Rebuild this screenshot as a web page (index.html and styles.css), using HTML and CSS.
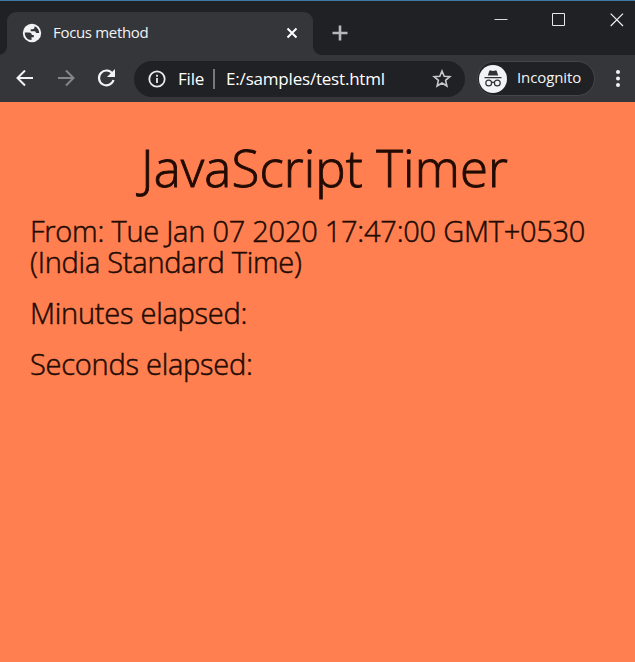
FILE: index.html
```html
<!DOCTYPE html>
<html lang="en">
<head>
    <meta charset="UTF-8">
    <meta name="viewport" content="width=device-width, initial-scale=1.0">
    <title>Focus method</title>
    <link rel="stylesheet" href="styles.css">
</head>
<body>
    <header class="browser">
        <div class="tabs">
            <div class="tab">
                <svg class="globe" width="20" height="20" viewBox="0 0 20 20">
                    <circle cx="10" cy="10" r="9.2" fill="#f1f3f4"/>
                    <path d="M2.800 9.500h4.200q2.800.2 2.800 2.600h2v2.200h-2.300v2.700C5.500 17.200 2.500 13.500 2.800 9.500zM12.500 3.200v1.300q0 1.800-2 1.800H8.700v2h4.100q1 0 1.200 1.700h3.200c0-3-1.800-5.800-4.700-6.800z" fill="#35363a"/>
                </svg>
                <span class="tab-title">Focus method</span>
                <svg class="tab-close" width="12" height="12" viewBox="0 0 12 12">
                    <path d="M1.500 1.500l9 9M10.500 1.500l-9 9" stroke="#fff" stroke-width="2"/>
                </svg>
            </div>
            <svg class="new-tab" width="16" height="16" viewBox="0 0 16 16">
                <path d="M8 .5v15M.5 8h15" stroke="#b5b8bc" stroke-width="2.600"/>
            </svg>
            <div class="window-buttons">
                <svg width="14" height="14" viewBox="0 0 14 14"><path d="M.5 6.500h13" stroke="#d8d8d8"/></svg>
                <svg width="14" height="14" viewBox="0 0 14 14"><path d="M.5.5h12v12H.5z" stroke="#e8e8e8" fill="none"/></svg>
                <svg width="14" height="14" viewBox="0 0 14 14"><path d="M.7.7l12.300 12.300M13 .7L.7 13" stroke="#f0f0f0" stroke-width="1.200"/></svg>
            </div>
        </div>
        <div class="toolbar">
            <svg class="back" width="18" height="18" viewBox="0 0 18 18">
                <path d="M17 8H2M9 .5L1.500 8 9 15.500" stroke="#f1f3f4" stroke-width="2" fill="none"/>
            </svg>
            <svg class="forward" width="18" height="18" viewBox="0 0 18 18">
                <path d="M0 8h15M8 .5l7.500 7.500L8 15.500" stroke="#85868a" stroke-width="2" fill="none"/>
            </svg>
            <svg class="reload" width="20" height="20" viewBox="0 0 20 20">
                <path d="M15.500 4.700A7.400 7.400 0 1 0 16.500 11" stroke="#f1f3f4" stroke-width="2.200" fill="none"/>
                <path d="M18 0v8h-8z" fill="#f1f3f4"/>
            </svg>
            <div class="address">
                <svg class="info" width="18" height="18" viewBox="0 0 18 18">
                    <circle cx="9" cy="9" r="7.700" stroke="#e8eaed" stroke-width="1.800" fill="none"/>
                    <path d="M9 8v5M9 4.800v1.900" stroke="#e8eaed" stroke-width="1.800"/>
                </svg>
                <span class="scheme">File</span>
                <span class="divider"></span>
                <span class="url">E:/samples/test.html</span>
                <svg class="star" width="20" height="20" viewBox="0 0 20 20">
                    <path d="M10 2l2.200 5.200 5.700.5-4.300 3.700 1.300 5.600-4.900-3-4.900 3 1.300-5.600-4.300-3.700 5.700-.5z" stroke="#c6c8cb" stroke-width="1.600" fill="none"/>
                </svg>
            </div>
            <div class="profile">
                <svg width="28" height="28" viewBox="0 0 28 28">
                    <circle cx="14" cy="14" r="14" fill="#f1f3f4"/>
                    <path d="M8.800 10.500l1.500-4.500q.3-.8 1.200-.6l2.500.6 2.500-.6q.9-.2 1.200.6l1.500 4.500zM5.500 12h17v1.200h-17z" fill="#303134"/>
                    <g fill="none" stroke="#303134" stroke-width="1.200">
                        <circle cx="9.700" cy="18" r="2.900"/>
                        <circle cx="18.300" cy="18" r="2.900"/>
                        <path d="M12.600 17.700q1.400-1 2.800 0"/>
                    </g>
                </svg>
                <span class="profile-name">Incognito</span>
            </div>
            <svg class="menu" width="4" height="18" viewBox="0 0 4 18" fill="#f1f3f4">
                <circle cx="2" cy="2" r="2"/>
                <circle cx="2" cy="8.500" r="2"/>
                <circle cx="2" cy="15" r="2"/>
            </svg>
        </div>
    </header>
    <main>
        <h1 class="title">JavaScript Timer</h1>
        <p class="from">From: Tue Jan 07 2020 17:47:00 GMT+0530 (India Standard Time)</p>
        <p class="elapsed">Minutes elapsed:</p>
        <p class="elapsed">Seconds elapsed:</p>
    </main>
</body>
</html>
```
FILE: styles.css
```css
*,
*::before,
*::after {
    box-sizing: border-box;
    padding: 0;
    margin: 0;
}

body {
    height: 662px;
    overflow: hidden;
    background-color: #ff7f50;
    font-family: "Open Sans", "Noto Sans", sans-serif;
}

svg {
    display: block;
    flex: none;
}

span,
h1 {
    white-space: nowrap;
}

.browser {
    height: 102px;
    background-color: #35363a;
}

.tabs {
    display: flex;
    height: 55px;
    border-top: 1px solid #3d78a8;
    background-color: #202124;
}

.tab {
    position: relative;
    display: flex;
    align-items: center;
    width: 306px;
    height: 43px;
    margin: 11px 0 0 7px;
    padding: 0 15px 0 15px;
    border-radius: 9px 9px 0 0;
    background-color: #35363a;
}

/* flared feet of the tab */
.tab::before,
.tab::after {
    content: "";
    position: absolute;
    bottom: 0;
    width: 8px;
    height: 8px;
}

.tab::before {
    left: -8px;
    background: radial-gradient(circle at 0 0, transparent 7.5px, #35363a 8px);
}

.tab::after {
    right: -8px;
    background: radial-gradient(circle at 100% 0, transparent 7.5px, #35363a 8px);
}

.globe,
.tab-close {
    margin-bottom: 1px;
}

.tab-title {
    margin: 0 0 3px 11px;
    color: #f1f3f4;
    font-size: 15px;
    letter-spacing: -0.32px;
    line-height: 20px;
}

.tab-close {
    margin-left: auto;
}

.new-tab {
    margin: 24px 0 0 19px;
}

.window-buttons {
    display: flex;
    gap: 44px;
    margin: 12px 11px 0 auto;
}

.toolbar {
    display: flex;
    align-items: center;
    height: 47px;
    padding-left: 16px;
}

.forward {
    margin-left: 24px;
}

.reload {
    margin-left: 21px;
}

.address {
    display: flex;
    align-items: center;
    width: 331px;
    height: 36px;
    margin-left: 17px;
    padding: 0 13px 0 14px;
    border-radius: 18px;
    background-color: #202124;
    color: #fff;
    font-size: 17px;
    letter-spacing: -0.2px;
}

.scheme {
    margin-left: 12px;
}

.divider {
    width: 2px;
    height: 20px;
    margin: 0 11px 0 9px;
    background-color: #77787b;
}

.star {
    margin-left: auto;
}

.profile {
    display: flex;
    align-items: center;
    width: 118px;
    height: 35px;
    margin-left: 12px;
    padding-left: 1px;
    border: 1px solid #45464a;
    border-radius: 18px;
    background-color: #202124;
    color: #f1f3f4;
    font-size: 15px;
}

.profile-name {
    margin: 0 0 3px 10px;
    letter-spacing: -0.1px;
}

.menu {
    margin-left: 21px;
}

main {
    padding: 33px 30px;
    color: #220b03;
    font-weight: 300;
    -webkit-text-stroke: 0.5px #220b03;
}

.title {
    padding-left: 14px;
    text-align: center;
    font-size: 51px;
    font-weight: 300;
    letter-spacing: 0.1px;
    line-height: 64px;
    -webkit-text-stroke-width: 0.9px;
}

.from,
.elapsed {
    font-size: 29px;
    letter-spacing: -0.25px;
    line-height: 31px;
}

.from {
    margin-top: 16px;
}

.elapsed {
    margin-top: 20px;
}
```
